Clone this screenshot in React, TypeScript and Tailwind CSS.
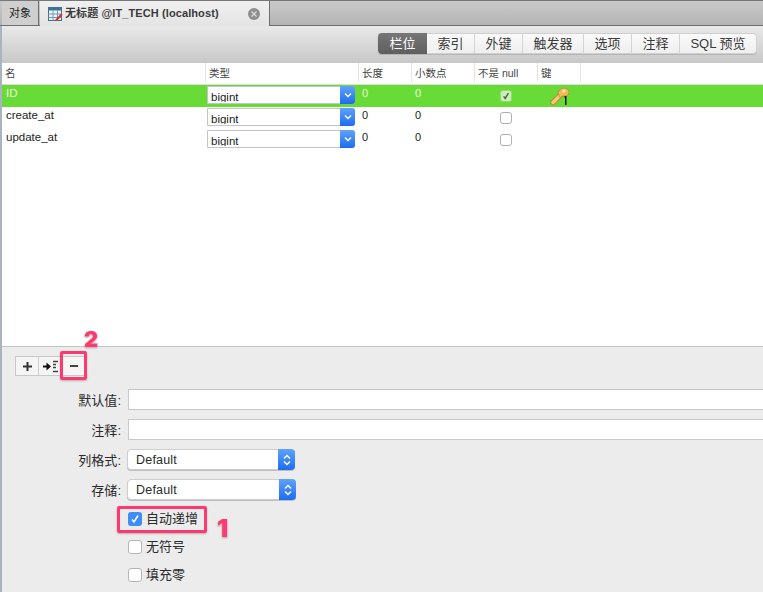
const font = { fontFamily: '"Liberation Sans", "Noto Sans CJK SC", sans-serif' };

const segments = [
  { label: '栏位', w: 'w-[49px]', active: true },
  { label: '索引', w: 'w-[48px]' },
  { label: '外键', w: 'w-[48px]' },
  { label: '触发器', w: 'w-[61px]' },
  { label: '选项', w: 'w-[48px]' },
  { label: '注释', w: 'w-[48px]' },
  { label: 'SQL 预览', w: 'w-[76px]' },
];

const columns = [
  { label: '名', w: 'w-[204px]' },
  { label: '类型', w: 'w-[153px]' },
  { label: '长度', w: 'w-[53px]' },
  { label: '小数点', w: 'w-[63px]' },
  { label: '不是 null', w: 'w-[63px]' },
  { label: '键', w: 'w-[43px]' },
];

const rows = [
  { name: 'ID', selected: true, notNull: true, key: true },
  { name: 'create_at' },
  { name: 'update_at' },
];

const TableIcon = () => (
  <svg width="15" height="16" viewBox="0 0 15 16" className="shrink-0">
    <rect x="0.5" y="1.5" width="13" height="13" fill="#eef3f8" stroke="#3f7396" />
    <rect x="0.5" y="1.5" width="13" height="3" fill="#3f7396" />
    <path d="M0.5 8H13.5M0.5 11.5H13.5M5 4.5V14.5M9.5 4.5V14.5" stroke="#6f9ab5" />
    <path d="M7 14L13 7.5L14.5 9L9 15Z" fill="#d8342b" />
  </svg>
);

const KeyIcon = () => (
  <svg width="20" height="19" viewBox="0 0 20 19">
    <path d="M3 15.5L10 8.5" stroke="#b98a2c" strokeWidth="5.5" strokeLinecap="round" />
    <path d="M3 15.5L10 8.5" stroke="#f4c978" strokeWidth="3.5" strokeLinecap="round" />
    <path d="M8 6C9 3 11 1 14 1C17 1 19 3 19 5.5C19 8 17 9 15 9L12 9L10.5 11.5Z" fill="#eebb55" stroke="#b98a2c" strokeWidth="0.8" />
    <circle cx="14" cy="4" r="1.5" fill="#fff0c4" />
    <path d="M14.5 9H16.5V18H15V11H14.5Z" fill="#1a1a1a" />
  </svg>
);

const Chevron = ({ updown }: { updown?: boolean }) => (
  <svg width="10" height="14" viewBox="0 0 10 14" fill="none" stroke="#fff" strokeWidth="1.4">
    {updown && <path d="M2 5.5L5 2.5L8 5.5" />}
    <path d={updown ? 'M2 8.5L5 11.5L8 8.5' : 'M2 5.5L5 8.5L8 5.5'} />
  </svg>
);

const TypeSelect = () => (
  <div className="flex h-[18px] w-[148px] bg-white border border-[#c4c4c4] rounded-r-[3px]">
    <span className="flex-1 h-[15px] pl-[3px] pt-[3px] text-[11.5px] leading-[15px] text-[#222] overflow-hidden">bigint</span>
    <span className="flex w-[15px] -my-px -mr-px items-center justify-center rounded-r-[3px] bg-gradient-to-b from-[#5ea2fb] to-[#1c6cf0]">
      <Chevron />
    </span>
  </div>
);

const FormSelect = ({ w }: { w: string }) => (
  <div className={`flex h-[21px] ${w} -ml-px bg-white border border-[#cdcdcd] rounded-[4px] shadow-[0_1px_0_#bdbdbd]`}>
    <span className="flex-1 pl-[8px] pt-px text-[12.5px] leading-[19px] text-[#2a2a2a] tracking-[0.2px]">Default</span>
    <span className="flex w-[17px] -my-px -mr-px items-center justify-center rounded-r-[4px] bg-gradient-to-b from-[#5ea2fb] to-[#1c6cf0]">
      <Chevron updown />
    </span>
  </div>
);

const FormRow = ({ label, className, children }: { label: string; className: string; children: React.ReactNode }) => (
  <div className={`flex items-center ${className}`}>
    <span className="w-[119px] shrink-0 pt-[3px] text-right text-[13px] leading-[18px] text-[#2a2a2a]">{label}:</span>
    <div className="ml-[7px] flex-1 min-w-0">{children}</div>
  </div>
);

const Check = ({ label, checked, className }: { label: string; checked?: boolean; className: string }) => (
  <div className={`flex items-center pl-[126px] ${className}`}>
    {checked ? (
      <span className="flex size-[14px] items-center justify-center rounded-[3px] bg-[#3f8df5]">
        <svg width="10" height="10" viewBox="0 0 10 10" fill="none" stroke="#fff" strokeWidth="1.5">
          <path d="M2 5.5L4 8L8 1.5" />
        </svg>
      </span>
    ) : (
      <span className="size-[14px] rounded-[3px] bg-white border border-[#b5b5b5]" />
    )}
    <span className="ml-[4px] text-[13px] leading-[18px] text-[#2a2a2a]">{label}</span>
  </div>
);

export default function App() {
  return (
    <div style={font} className="relative w-[763px] h-[592px] overflow-hidden bg-[#ececec]">
      {/* Tabs */}
      <div className="flex h-[26px] pl-[2px] bg-gradient-to-b from-[#c9c9c9] to-[#b4b4b4] border-t border-t-[#777] border-b border-b-[#6e6e6e]">
        <div className="flex w-[37px] items-center justify-center border-r border-[#6e6e6e] bg-[#cfcfcf] text-[11px] text-[#222]">对象</div>
        <div className="flex w-[230px] -mb-px ml-px items-center pl-[8px] border-r border-[#6e6e6e] bg-gradient-to-b from-[#f0f0f0] to-[#e4e4e4]">
          <TableIcon />
          <span className="ml-[2px] text-[11px] font-bold text-[#3a3a3a] tracking-[0.1px]">无标题 @IT_TECH (localhost)</span>
          <span className="ml-auto mr-[9px] flex size-[12px] items-center justify-center rounded-full bg-[#8f8f8f] text-[#d8d8d8]">
            <svg width="6" height="6" viewBox="0 0 6 6" stroke="currentColor" strokeWidth="1.3"><path d="M0.5 0.5L5.5 5.5M5.5 0.5L0.5 5.5" /></svg>
          </span>
        </div>
      </div>

      <div className="flex h-[566px]">
        <div className="w-[2px] shrink-0 bg-[#a9b4c0]" />
        <div className="flex-1 min-w-0 flex flex-col">
          {/* Segmented toolbar */}
          <div className="flex h-[37px] items-start justify-end pt-[7px] pr-[7px] bg-gradient-to-b from-[#e9e9e9] to-[#c8c8c8]">
            <div className="flex h-[21px] rounded-[4px] border border-[#d0d0d0] bg-gradient-to-b from-[#fafafa] to-[#efefef] shadow-[0_1px_0_#b5b5b5] -mr-px">
              {segments.map((s) => (
                <div
                  key={s.label}
                  className={`flex ${s.w} items-center justify-center text-[13px] -my-px ${
                    s.active
                      ? 'rounded-l-[4px] bg-gradient-to-b from-[#767676] to-[#5f5f5f] text-white'
                      : 'border-r border-[#d4d4d4] last:border-r-0 text-[#3a3a3a]'
                  }`}
                >
                  {s.label}
                </div>
              ))}
            </div>
          </div>

          {/* Column headers */}
          <div className="flex h-[22px] bg-white border-b border-[#dcdcdc]">
            {columns.map((c) => (
              <div key={c.label} className={`${c.w} shrink-0 pl-[3px] pt-[3px] mb-[2px] text-[10.5px] leading-[15px] text-[#444] border-r border-[#e4e4e4]`}>
                {c.label}
              </div>
            ))}
          </div>

          {/* Rows */}
          <div className="h-[261px] bg-white">
            {rows.map((r) => (
              <div key={r.name} className={`flex h-[22px] ${r.selected ? 'bg-[#69db37] text-[#e8f8dc]' : 'text-[#222]'}`}>
                <div className="w-[204px] pl-[4px] text-[11.5px] leading-[15px] pt-[1px] shrink-0">{r.name}</div>
                <div className="w-[153px] pl-[1px] pt-[1px] shrink-0"><TypeSelect /></div>
                <div className="w-[53px] pl-[3px] text-[11px] leading-[15px] pt-[1px] shrink-0">0</div>
                <div className="w-[63px] pl-[3px] text-[11px] leading-[15px] pt-[1px] shrink-0">0</div>
                <div className="w-[63px] flex justify-center pt-[5px] shrink-0 pr-[1px]">
                  <span
                    className={`flex size-[12px] items-center justify-center rounded-[3px] border ${
                      r.notNull ? 'border-[#9fcf86] bg-[#c9efb6] text-[#3f6b2a]' : 'border-[#b0b0b0] bg-white'
                    }`}
                  >
                    {r.notNull && (
                      <svg width="8" height="8" viewBox="0 0 10 10" fill="none" stroke="currentColor" strokeWidth="1.8"><path d="M2 5.5L4 8L8 1.5" /></svg>
                    )}
                  </span>
                </div>
                {r.key && <div className="pl-[12px] pt-[2px]"><KeyIcon /></div>}
              </div>
            ))}
          </div>

          {/* Bottom panel */}
          <div className="flex-1 border-t border-[#c4c4c4] bg-[#ececec]">
            <div className="flex h-[20px] w-[71px] mt-[9px] ml-[13px] bg-[#f5f5f5] border border-[#c8c8c8] text-[#333]">
              <div className="flex w-[23px] items-center justify-center border-r border-[#d0d0d0]">
                <svg width="9" height="9" viewBox="0 0 9 9" stroke="#333" strokeWidth="2"><path d="M4.5 0V9M0 4.5H9" /></svg>
              </div>
              <div className="flex w-[23px] items-center justify-center">
                <svg width="16" height="13" viewBox="0 0 16 13">
                  <path d="M0 6.5H4" stroke="#111" strokeWidth="2" />
                  <path d="M3.5 2.5L8 6.5L3.5 10.5Z" fill="#111" />
                  <path d="M10 1.5H15M10 4.5H13M10 7.5H13M10 11.5H15" stroke="#444" strokeWidth="1.5" />
                </svg>
              </div>
              <div className="flex flex-1 items-center justify-center">
                <svg width="8" height="2" viewBox="0 0 8 2" stroke="#444" strokeWidth="2"><path d="M0 1H8" /></svg>
              </div>
            </div>

            <FormRow label="默认值" className="mt-[13px] h-[21px]">
              <div className="h-[21px] w-[700px] bg-white border border-[#c8c8c8]" />
            </FormRow>
            <FormRow label="注释" className="mt-[9px] h-[21px]">
              <div className="h-[21px] w-[700px] bg-white border border-[#c8c8c8]" />
            </FormRow>
            <FormRow label="列格式" className="mt-[9px] h-[21px]">
              <FormSelect w="w-[168px]" />
            </FormRow>
            <FormRow label="存储" className="mt-[9px] h-[21px]">
              <FormSelect w="w-[169px]" />
            </FormRow>
            <Check label="自动递增" checked className="mt-[10px] h-[18px]" />
            <Check label="无符号" className="mt-[10px] h-[18px]" />
            <Check label="填充零" className="mt-[10px] h-[18px]" />
          </div>
        </div>
      </div>

      {/* Annotations */}
      <div className="absolute left-[60px] top-[351px] h-[29px] w-[27px] border-[3px] border-[#fb3a72] rounded-[2px] shadow-[0_1px_2px_rgba(0,0,0,0.25)]" />
      <div className="absolute left-[117px] top-[506px] h-[27px] w-[90px] border-[3px] border-[#fb3a72] rounded-[2px] shadow-[0_1px_2px_rgba(0,0,0,0.25)]" />
      <span className="absolute left-[84px] top-[326px] text-[22px] leading-[26px] font-black text-[#fb3a72] [font-family:Inter,sans-serif] [text-shadow:0_0_2px_#fff,0_1px_2px_rgba(0,0,0,0.4)]">2</span>
      <span className="absolute left-[217px] top-[514px] text-[25px] leading-[28px] font-black text-[#fb3a72] [font-family:Inter,sans-serif] [text-shadow:0_0_2px_#fff,0_1px_2px_rgba(0,0,0,0.4)]">1</span>
    </div>
  );
}
